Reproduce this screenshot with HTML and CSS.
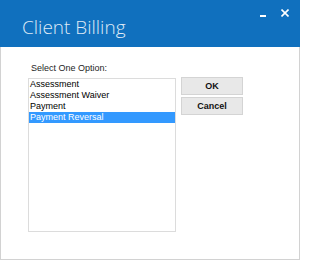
FILE: index.html
```html
<!DOCTYPE html>
<html>
<head>
<meta charset="utf-8">
<link rel="stylesheet" href="styles.css">
</head>
<body>
<div class="window">
  <div class="titlebar">
    <div class="title">Client Billing</div>
    <div class="controls">
      <span class="minimize"></span>
      <svg class="close" width="8" height="8" viewBox="0 0 8 8"><path d="M0.5 0.5 L7.5 7.5 M7.5 0.5 L0.5 7.5" stroke="#ffffff" stroke-width="1.6" fill="none"/></svg>
    </div>
  </div>
  <div class="content">
    <div class="label">Select One Option:</div>
    <div class="row">
      <div class="listbox">
        <div class="item">Assessment</div>
        <div class="item">Assessment Waiver</div>
        <div class="item">Payment</div>
        <div class="item selected">Payment Reversal</div>
      </div>
      <div class="buttons">
        <button class="btn">OK</button>
        <button class="btn">Cancel</button>
      </div>
    </div>
  </div>
</div>
</body>
</html>
```
FILE: styles.css
```css
html, body {
  margin: 0;
  padding: 0;
  background: #ffffff;
}
.window {
  width: 300px;
  height: 260px;
  display: flex;
  flex-direction: column;
  font-family: "Liberation Sans", Arial, sans-serif;
}
.titlebar {
  height: 47px;
  flex: none;
  background: #1070be;
  display: flex;
  justify-content: space-between;
  align-items: flex-start;
}
.title {
  margin-top: 14px;
  padding-left: 22px;
  font-family: "Open Sans", sans-serif;
  font-weight: 300;
  font-size: 19px;
  line-height: 26px;
  color: #dfeaf6;
}
.controls {
  display: flex;
  align-items: flex-start;
  margin-top: 9px;
  margin-right: 11px;
}
.minimize {
  display: block;
  width: 6px;
  height: 2px;
  background: #ffffff;
  margin-top: 6px;
  margin-right: 15px;
}
.close {
  display: block;
}
.content {
  flex: 1;
  border: 1px solid #d2d2d2;
  border-top: none;
  padding: 16px 0 0 27px;
}
.label {
  font-size: 9px;
  line-height: 11px;
  color: #1e1e1e;
  padding-left: 3px;
  margin-bottom: 4px;
}
.row {
  display: flex;
  align-items: flex-start;
}
.listbox {
  width: 146px;
  height: 152px;
  border: 1px solid #dcdcdc;
  background: #ffffff;
}
.item {
  font-size: 9px;
  line-height: 11px;
  color: #000000;
  padding-left: 1px;
  white-space: nowrap;
}
.item.selected {
  background: #3399ff;
  color: #ffffff;
}
.buttons {
  display: flex;
  flex-direction: column;
  gap: 2px;
  margin-left: 5px;
  margin-top: -1px;
}
.btn {
  width: 62px;
  height: 18px;
  margin: 0;
  padding: 0;
  border: 1px solid #d4d4d4;
  background: #e8e8e8;
  font-family: "Liberation Sans", Arial, sans-serif;
  font-weight: bold;
  font-size: 9px;
  color: #111111;
}
```
